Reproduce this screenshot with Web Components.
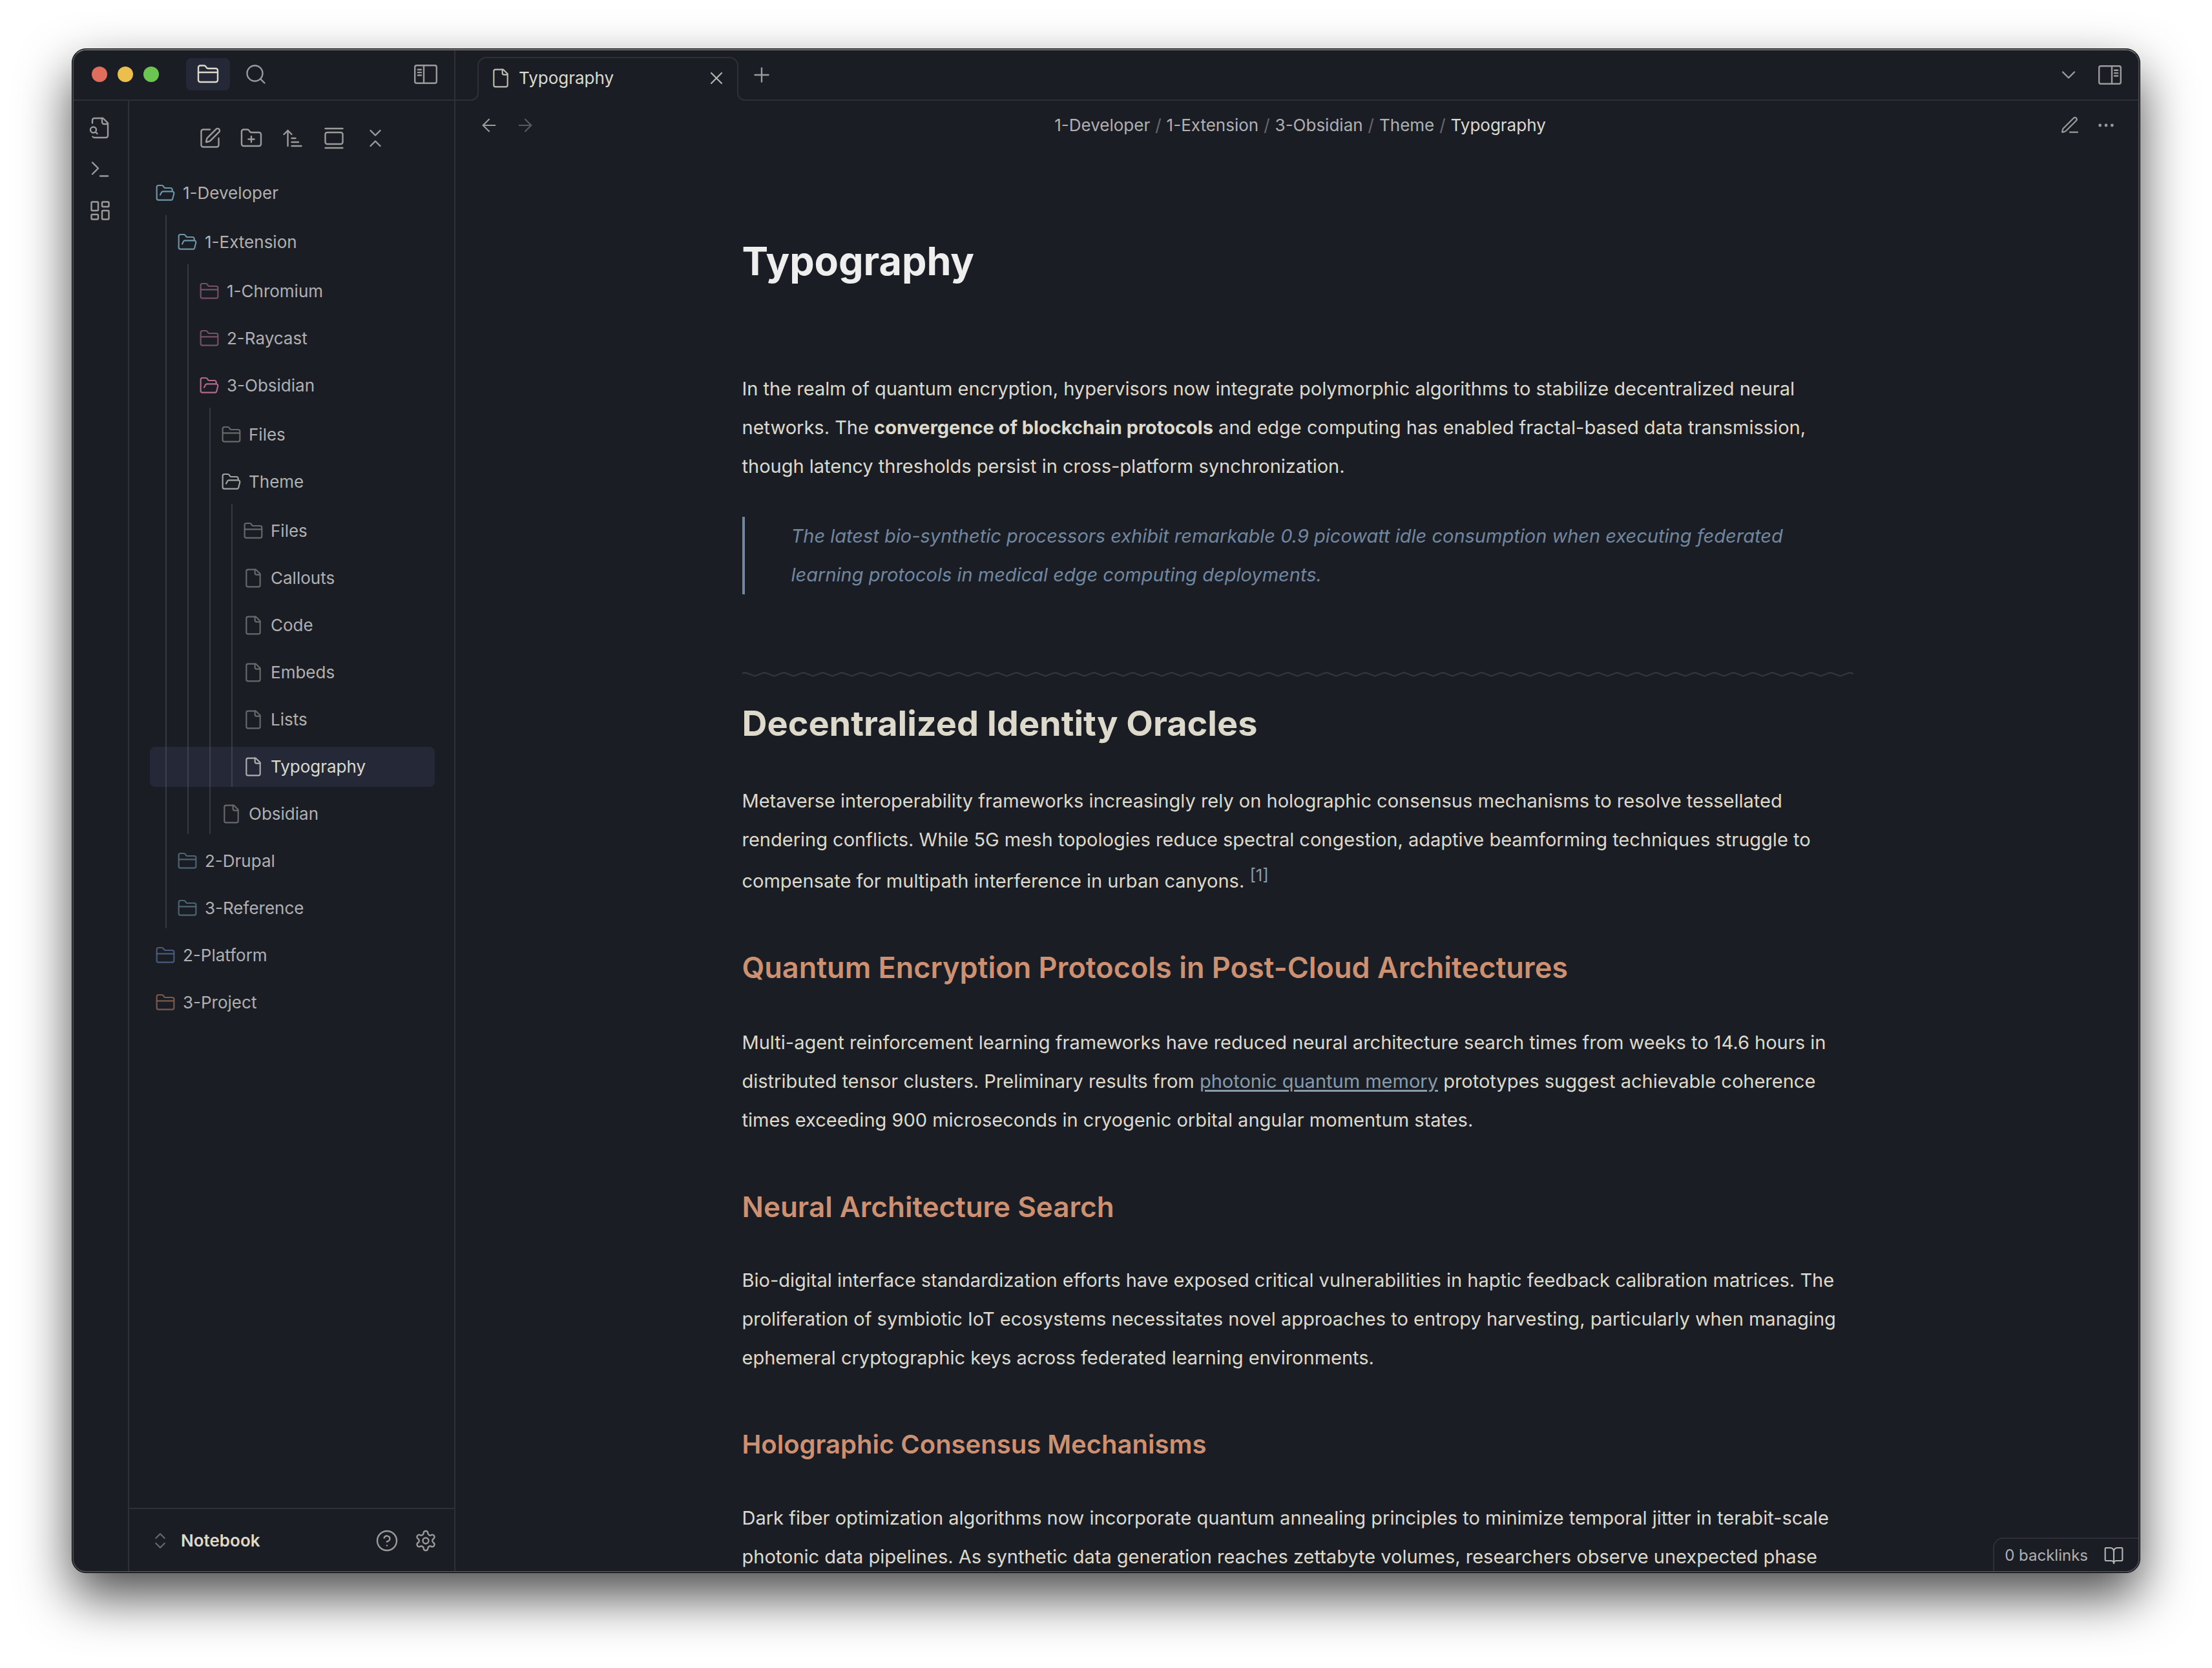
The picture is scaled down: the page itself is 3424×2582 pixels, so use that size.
<!DOCTYPE html>
<html lang="en">
<head>
<meta charset="utf-8">
<title>Typography - Notebook</title>
<style>
  html { height: 100%; background: #fff; }
  body {
    margin: 0; box-sizing: border-box; height: 100%; padding: 75px 111px 147px; overflow: hidden;
    font: 400 26px/32px Inter, "Liberation Sans", sans-serif;
    --bg: #1b1d25; --line: #302f39; --active: #252837;
    --cream: #dddacb; --text: #b0b0b0; --muted: #9b9b9b; --faint: #69696b;
    color: var(--text);
  }
</style>
</head>
<body>
<app-window>
  <traffic-lights slot="head"></traffic-lights>
  <panel-tabs slot="head"></panel-tabs>
  <icon-button slot="head" icon="panelLeft" size="36" label="Collapse sidebar"></icon-button>

  <icon-button slot="ribbon" icon="fileSearch" size="36" label="Open quick switcher"></icon-button>
  <icon-button slot="ribbon" icon="terminal" size="36" label="Open command palette"></icon-button>
  <icon-button slot="ribbon" icon="dashboard" size="36" label="Manage workspaces"></icon-button>

  <side-panel slot="side">
    <icon-button slot="actions" icon="edit" size="36" label="New note"></icon-button>
    <icon-button slot="actions" icon="folderPlus" size="36" label="New folder"></icon-button>
    <icon-button slot="actions" icon="sort" size="36" label="Change sort order"></icon-button>
    <icon-button slot="actions" icon="gallery" size="36" label="Auto-reveal current file"></icon-button>
    <icon-button slot="actions" icon="collapse" size="36" label="Collapse all"></icon-button>

    <tree-item depth="0" kind="open" name="1-Developer" tint="#6c97a7">
      <tree-item depth="1" kind="open" name="1-Extension" tint="#6c97a7">
        <tree-item depth="2" kind="folder" name="1-Chromium" tint="#75506a"></tree-item>
        <tree-item depth="2" kind="folder" name="2-Raycast" tint="#75506a"></tree-item>
        <tree-item depth="2" kind="open" name="3-Obsidian" tint="#b4698f">
          <tree-item depth="3" kind="folder" name="Files"></tree-item>
          <tree-item depth="3" kind="open" name="Theme" tint="#a4a4a2">
            <tree-item depth="4" kind="folder" name="Files"></tree-item>
            <tree-item depth="4" kind="file" name="Callouts"></tree-item>
            <tree-item depth="4" kind="file" name="Code"></tree-item>
            <tree-item depth="4" kind="file" name="Embeds"></tree-item>
            <tree-item depth="4" kind="file" name="Lists"></tree-item>
            <tree-item depth="4" kind="file" name="Typography" tint="#b0b0b0" active></tree-item>
          </tree-item>
          <tree-item depth="3" kind="file" name="Obsidian"></tree-item>
        </tree-item>
      </tree-item>
      <tree-item depth="1" kind="folder" name="2-Drupal" tint="#4a6670"></tree-item>
      <tree-item depth="1" kind="folder" name="3-Reference" tint="#4a6670"></tree-item>
    </tree-item>
    <tree-item depth="0" kind="folder" name="2-Platform" tint="#4a5a7c"></tree-item>
    <tree-item depth="0" kind="folder" name="3-Project" tint="#7b5a4c"></tree-item>

    <vault-bar slot="foot" name="Notebook"></vault-bar>
  </side-panel>

  <tab-strip slot="main"></tab-strip>
  <view-header slot="main" path="1-Developer/1-Extension/3-Obsidian/Theme/Typography"></view-header>
  <note-article slot="main"></note-article>
  <status-bar slot="status">0 backlinks</status-bar>
</app-window>

<script>
const ICONS = {
  folder: '<path d="M20 20a2 2 0 0 0 2-2V8a2 2 0 0 0-2-2h-7.9a2 2 0 0 1-1.69-.9L9.6 3.9A2 2 0 0 0 7.93 3H4a2 2 0 0 0-2 2v13a2 2 0 0 0 2 2Z"/><path d="M2 10h20"/>',
  open: '<path d="m6 14 1.5-2.9A2 2 0 0 1 9.24 10H20a2 2 0 0 1 1.94 2.5l-1.54 6a2 2 0 0 1-1.95 1.5H4a2 2 0 0 1-2-2V5a2 2 0 0 1 2-2h3.9a2 2 0 0 1 1.69.9l.81 1.2a2 2 0 0 0 1.67.9H18a2 2 0 0 1 2 2v2"/>',
  file: '<path d="M15 2H6a2 2 0 0 0-2 2v16a2 2 0 0 0 2 2h12a2 2 0 0 0 2-2V7Z"/><path d="M14 2v4a2 2 0 0 0 2 2h4"/>',
  search: '<circle cx="11" cy="11" r="8"/><path d="m21 21-4.3-4.3"/>',
  fileSearch: '<path d="M14 2v4a2 2 0 0 0 2 2h4"/><path d="M4.27 21A2 2 0 0 0 6 22h12a2 2 0 0 0 2-2V7l-5-5H6a2 2 0 0 0-2 2v3"/><path d="m9 18-1.5-1.5"/><circle cx="5" cy="14" r="3"/>',
  terminal: '<path d="m4 17 6-6-6-6"/><path d="M12 19h8"/>',
  dashboard: '<rect width="7" height="9" x="3" y="3" rx="1"/><rect width="7" height="5" x="14" y="3" rx="1"/><rect width="7" height="9" x="14" y="12" rx="1"/><rect width="7" height="5" x="3" y="16" rx="1"/>',
  edit: '<path d="M12 3H5a2 2 0 0 0-2 2v14a2 2 0 0 0 2 2h14a2 2 0 0 0 2-2v-7"/><path d="M18.375 2.625a2.12 2.12 0 0 1 3 3l-9.013 9.014a2 2 0 0 1-.853.505l-2.873.84a.5.5 0 0 1-.62-.62l.84-2.873a2 2 0 0 1 .506-.852z"/>',
  folderPlus: '<path d="M12 10v6"/><path d="M9 13h6"/><path d="M20 20a2 2 0 0 0 2-2V8a2 2 0 0 0-2-2h-7.9a2 2 0 0 1-1.69-.9L9.6 3.9A2 2 0 0 0 7.93 3H4a2 2 0 0 0-2 2v13a2 2 0 0 0 2 2Z"/>',
  sort: '<path d="m3 8 4-4 4 4"/><path d="M7 4v16"/><path d="M11 12h4"/><path d="M11 16h7"/><path d="M11 20h10"/>',
  gallery: '<path d="M3 2h18"/><rect width="18" height="12" x="3" y="6" rx="2"/><path d="M3 22h18"/>',
  collapse: '<path d="m7 20 5-5 5 5"/><path d="m7 4 5 5 5-5"/>',
  updown: '<path d="m7 15 5 5 5-5"/><path d="m7 9 5-5 5 5"/>',
  close: '<path d="M18 6 6 18"/><path d="m6 6 12 12"/>',
  plus: '<path d="M5 12h14"/><path d="M12 5v14"/>',
  down: '<path d="m6 9 6 6 6-6"/>',
  back: '<path d="m12 19-7-7 7-7"/><path d="M19 12H5"/>',
  forward: '<path d="M5 12h14"/><path d="m12 5 7 7-7 7"/>',
  pen: '<path d="M12 20h9"/><path d="M16.376 3.622a1 1 0 0 1 3.002 3.002L7.368 18.635a2 2 0 0 1-.855.506l-2.872.838a.5.5 0 0 1-.62-.62l.838-2.872a2 2 0 0 1 .506-.854z"/>',
  more: '<circle cx="12" cy="12" r="1"/><circle cx="19" cy="12" r="1"/><circle cx="5" cy="12" r="1"/>',
  help: '<circle cx="12" cy="12" r="10"/><path d="M9.09 9a3 3 0 0 1 5.83 1c0 2-3 3-3 3"/><path d="M12 17h.01"/>',
  gear: '<path d="M12.22 2h-.44a2 2 0 0 0-2 2v.18a2 2 0 0 1-1 1.73l-.43.25a2 2 0 0 1-2 0l-.15-.08a2 2 0 0 0-2.73.73l-.22.38a2 2 0 0 0 .73 2.73l.15.1a2 2 0 0 1 1 1.72v.51a2 2 0 0 1-1 1.74l-.15.09a2 2 0 0 0-.73 2.73l.22.38a2 2 0 0 0 2.73.73l.15-.08a2 2 0 0 1 2 0l.43.25a2 2 0 0 1 1 1.73V20a2 2 0 0 0 2 2h.44a2 2 0 0 0 2-2v-.18a2 2 0 0 1 1-1.73l.43-.25a2 2 0 0 1 2 0l.15.08a2 2 0 0 0 2.73-.73l.22-.39a2 2 0 0 0-.73-2.73l-.15-.08a2 2 0 0 1-1-1.74v-.5a2 2 0 0 1 1-1.74l.15-.09a2 2 0 0 0 .73-2.73l-.22-.38a2 2 0 0 0-2.73-.73l-.15.08a2 2 0 0 1-2 0l-.43-.25a2 2 0 0 1-1-1.73V4a2 2 0 0 0-2-2z"/><circle cx="12" cy="12" r="3"/>',
  book: '<path d="M12 7v14"/><path d="M3 18a1 1 0 0 1-1-1V4a1 1 0 0 1 1-1h5a4 4 0 0 1 4 4 4 4 0 0 1 4-4h5a1 1 0 0 1 1 1v13a1 1 0 0 1-1 1h-6a3 3 0 0 0-3 3 3 3 0 0 0-3-3z"/>',
  panelLeft: '<rect x="0.8" y="2.8" width="22.4" height="18.4" rx="1.8"/><path d="M10 2.8v18.4M3.9 7.2h3.4M3.9 10.1h3.4M3.9 13h3.4"/>',
  panelRight: '<rect x="0.8" y="2.8" width="22.4" height="18.4" rx="1.8"/><path d="M14 2.8v18.4M16.7 7.2h3.4M16.7 10.1h3.4M16.7 13h3.4"/>'
};

class Base extends HTMLElement {
  connectedCallback() {
    if (this.shadowRoot) return;
    this.attachShadow({ mode: 'open' }).innerHTML =
      '<style>*,::before,::after{box-sizing:border-box}' + this.css() + '</style>' + this.html();
  }
}

customElements.define('ui-icon', class extends Base {
  css() { const s = this.getAttribute('size') || 32; return `:host{display:block;flex:none;width:${s}px;height:${s}px}svg{display:block;width:100%;height:100%}`; }
  html() {
    return `<svg viewBox="0 0 24 24" fill="none" stroke="currentColor" stroke-width="1.6" stroke-linecap="round" stroke-linejoin="round" aria-hidden="true">${ICONS[this.getAttribute('name')]}</svg>`;
  }
});

customElements.define('icon-button', class extends Base {
  css() { return `:host{display:block;flex:none;color:var(--muted)}button{display:block;margin:0;padding:0;border:0;background:none;color:inherit;cursor:pointer}`; }
  html() {
    return `<button type="button" aria-label="${this.getAttribute('label')}"><ui-icon name="${this.getAttribute('icon')}" size="${this.getAttribute('size') || 32}"></ui-icon></button>`;
  }
});

customElements.define('app-window', class extends Base {
  css() { return `
    :host{display:flex;position:relative;height:100%;box-sizing:border-box;border:1px solid #000;border-radius:22px;overflow:hidden;background:var(--bg);box-shadow:0 36px 80px rgba(0,0,0,.7)}
    :host::after{content:"";position:absolute;inset:0;border:2px solid #4a4b51;border-top-color:#6c6e70;border-radius:21px;pointer-events:none}
    .left{flex:none;width:593px;display:flex;flex-direction:column;border-right:2px solid var(--line)}
    header{flex:none;height:80px;display:flex;align-items:center;padding:0 26px 0 30px;border-bottom:2px solid var(--line)}
    .body{flex:1;min-height:0;display:flex}
    .ribbon{flex:none;width:88px;display:flex;flex-direction:column;align-items:center;gap:28px;padding-top:24px;border-right:2px solid var(--line)}
    main{flex:1;min-width:0;display:flex;flex-direction:column}
    ::slotted(side-panel){flex:1;min-width:0}
    ::slotted(icon-button[slot=head]){margin-left:auto}
    ::slotted(note-article){flex:1;min-height:0}
    .status{position:absolute;right:0;bottom:0}`; }
  html() { return `
    <div class="left"><header><slot name="head"></slot></header>
      <div class="body"><nav class="ribbon"><slot name="ribbon"></slot></nav><slot name="side"></slot></div></div>
    <main><slot name="main"></slot></main>
    <div class="status"><slot name="status"></slot></div>`; }
});

customElements.define('traffic-lights', class extends Base {
  css() { return `:host{display:flex;gap:16px}i{width:24px;height:24px;border-radius:50%}`; }
  html() { return `<i style="background:#e16d5c"></i><i style="background:#ecbf4c"></i><i style="background:#6bc550"></i>`; }
});

customElements.define('panel-tabs', class extends Base {
  css() { return `:host{display:flex;align-items:center;margin-left:42px;gap:22px}
    button{display:flex;align-items:center;justify-content:center;width:68px;height:50px;border:0;border-radius:8px;padding:0;background:var(--active);color:var(--cream)}`; }
  html() { return `<button type="button" aria-label="Files"><ui-icon name="folder" size="36"></ui-icon></button><icon-button icon="search" size="36" label="Search"></icon-button>`; }
});

customElements.define('side-panel', class extends Base {
  css() { return `:host{display:flex;flex-direction:column}
    .actions{display:flex;justify-content:center;gap:28px;padding:40px 0 36px 2px}
    .tree{flex:1;min-height:0;overflow:hidden;padding:0 30px 0 32px}
    .tree ::slotted(tree-item:first-of-type){margin-top:0}`; }
  html() { return `<div class="actions"><slot name="actions"></slot></div><div class="tree" role="tree"><slot></slot></div><slot name="foot"></slot>`; }
});

customElements.define('tree-item', class extends Base {
  css() {
    const d = +this.getAttribute('depth'), on = this.hasAttribute('active');
    return `:host{display:block;margin-top:11px}
    button{display:flex;align-items:center;gap:11px;width:100%;height:62px;margin:0;border:0;border-radius:8px;text-align:left;font:inherit;
      padding:0 8px 0 ${8 + 34 * d}px;color:${on ? 'var(--cream)' : 'inherit'};background:${on ? 'var(--active)' : 'none'}}
    ui-icon{color:${this.getAttribute('tint') || 'var(--faint)'}}
    .kids{position:relative;margin-top:3px;display:flow-root}
    .kids::before{content:"";position:absolute;z-index:1;top:0;bottom:0;left:${24 + 34 * d}px;width:2px;background:rgba(120,120,135,.3)}`;
  }
  html() {
    return `<button type="button" role="treeitem"><ui-icon name="${this.getAttribute('kind')}" size="32"></ui-icon><span>${this.getAttribute('name')}</span></button>` +
      (this.getAttribute('kind') === 'open' ? '<div class="kids" role="group"><slot></slot></div>' : '');
  }
});

customElements.define('vault-bar', class extends Base {
  css() { return `:host{display:flex;align-items:center;flex:none;height:98px;border-top:2px solid var(--line);padding:0 26px 0 32px}
    .vault{display:flex;align-items:center;gap:16px;margin:0 auto 0 0;padding:0;border:0;background:none;font:inherit;font-weight:600;color:var(--cream)}
    .vault ui-icon{color:var(--faint)}
    .tools{display:flex;gap:24px}`; }
  html() { return `<button type="button" class="vault"><ui-icon name="updown" size="32"></ui-icon><span>${this.getAttribute('name')}</span></button>
    <div class="tools"><icon-button icon="help" size="36" label="Help"></icon-button><icon-button icon="gear" size="36" label="Settings"></icon-button></div>`; }
});

customElements.define('tab-strip', class extends Base {
  css() { return `:host{display:flex;align-items:flex-end;flex:none;height:80px}
    .lead{width:22px;border-bottom:2px solid var(--line)}
    .tab{position:relative;width:428px;height:68px;display:flex;align-items:center;gap:12px;padding:0 30px 2px 32px;color:var(--cream)}
    .cap{position:absolute;inset:0 12px 12px;border:2px solid var(--line);border-bottom:0;border-radius:14px 14px 0 0}
    .tab::before,.tab::after{content:"";position:absolute;bottom:0;width:14px;height:14px;border-bottom:2px solid var(--line)}
    .tab::before{left:0;border-right:2px solid var(--line);border-bottom-right-radius:12px}
    .tab::after{right:0;border-left:2px solid var(--line);border-bottom-left-radius:12px}
    .tab ui-icon{opacity:.85}
    .tab icon-button{position:relative;margin-left:auto;color:#b4b4b2}
    .rest{flex:1;height:80px;display:flex;align-items:center;gap:28px;padding:2px 28px 0 6px;border-bottom:2px solid var(--line)}
    .rest icon-button:first-child{margin-right:auto}`; }
  html() { return `<div class="lead"></div>
    <div class="tab"><div class="cap"></div><ui-icon name="file" size="32"></ui-icon><span>Typography</span><icon-button icon="close" label="Close tab"></icon-button></div>
    <div class="rest"><icon-button icon="plus" size="36" label="New tab"></icon-button><icon-button icon="down" size="36" label="Tab list"></icon-button><icon-button icon="panelRight" size="36" label="Expand sidebar"></icon-button></div>`; }
});

customElements.define('view-header', class extends Base {
  css() { return `:host{display:flex;align-items:center;justify-content:space-between;flex:none;height:76px;padding:0 36px}
    div{display:flex;gap:24px}
    .off{color:#59595c}
    nav{display:flex;gap:8px;padding-left:8px;color:var(--faint)}
    a{color:var(--text);text-decoration:none}
    a:last-child{color:var(--cream)}`; }
  html() {
    const crumbs = this.getAttribute('path').split('/').map(c => `<a href="#">${c}</a>`).join('<span>/</span>');
    return `<div><icon-button icon="back" label="Back"></icon-button><icon-button class="off" icon="forward" label="Forward"></icon-button></div>
    <nav aria-label="Path">${crumbs}</nav>
    <div><icon-button icon="pen" label="Edit"></icon-button><icon-button icon="more" label="More options"></icon-button></div>`;
  }
});

customElements.define('wave-rule', class extends Base {
  css() { return `:host{display:block;height:8px;color:#32333d}svg{display:block;width:100%;height:8px}`; }
  html() { return `<svg aria-hidden="true"><defs><pattern id="w" width="30" height="8" patternUnits="userSpaceOnUse">
    <path d="M-10.500 6.500L2 1.800Q4.500 .8 7 1.800L19.500 6.500L32 1.800Q34.500 .8 37 1.800" fill="none" stroke="currentColor" stroke-width="2.400"/></pattern></defs><rect width="100%" height="8" fill="url(#w)"/></svg>`; }
});

customElements.define('note-article', class extends Base {
  css() { return `:host{display:block;overflow:hidden;padding:136px 40px 0;box-sizing:border-box;font-size:29px;line-height:60px;color:var(--cream)}
    article{max-width:1720px;margin:0 auto}
    h1,h2,h3,h4,h5,p,blockquote{margin:0}
    h1{font-size:61px;line-height:72px;font-weight:700;color:#eee;margin-bottom:132px}
    h2{font-size:54px;line-height:64px;font-weight:700;margin:40px 0 58px}
    h3,h4,h5{line-height:56px;font-weight:600;color:#cd9070;margin:76px 0 56px}
    h3{font-size:45px;margin-bottom:58px}h4{font-size:44px}h5{font-size:40px}
    b{font-weight:700}
    blockquote{margin:48px 0 120px;padding-left:72px;border-left:4px solid #70879f;font-style:italic;color:#70879f}
    sup{font-size:26px;line-height:50px;vertical-align:10px}
    sup a{text-decoration:none}
    a{color:#879cab;text-underline-offset:3px;text-decoration-thickness:3px}`; }
  html() { return `<article>
    <h1>Typography</h1>
    <p>In the realm of quantum encryption, hypervisors now integrate polymorphic algorithms to stabilize decentralized neural networks. The <b>convergence of blockchain protocols</b> and edge computing has enabled fractal-based data transmission, though latency thresholds persist in cross-platform synchronization.</p>
    <blockquote>The latest bio-synthetic processors exhibit remarkable 0.9 picowatt idle consumption when executing federated learning protocols in medical edge computing deployments.</blockquote>
    <wave-rule></wave-rule>
    <h2>Decentralized Identity Oracles</h2>
    <p>Metaverse interoperability frameworks increasingly rely on holographic consensus mechanisms to resolve tessellated rendering conflicts. While 5G mesh topologies reduce spectral congestion, adaptive beamforming techniques struggle to compensate for multipath interference in urban canyons. <sup><a href="#">[1]</a></sup></p>
    <h3>Quantum Encryption Protocols in Post-Cloud Architectures</h3>
    <p>Multi-agent reinforcement learning frameworks have reduced neural architecture search times from weeks to 14.6 hours in distributed tensor clusters. Preliminary results from <a href="#">photonic quantum memory</a> prototypes suggest achievable coherence times exceeding 900 microseconds in cryogenic orbital angular momentum states.</p>
    <h4>Neural Architecture Search</h4>
    <p>Bio-digital interface standardization efforts have exposed critical vulnerabilities in haptic feedback calibration matrices. The proliferation of symbiotic IoT ecosystems necessitates novel approaches to entropy harvesting, particularly when managing ephemeral cryptographic keys across federated learning environments.</p>
    <h5>Holographic Consensus Mechanisms</h5>
    <p>Dark fiber optimization algorithms now incorporate quantum annealing principles to minimize temporal jitter in terabit-scale photonic data pipelines. As synthetic data generation reaches zettabyte volumes, researchers observe unexpected phase</p>
  </article>`; }
});

customElements.define('status-bar', class extends Base {
  css() { return `:host{display:flex;align-items:center;gap:24px;height:54px;box-sizing:border-box;padding:0 24px 0 16px;font-size:24px;background:var(--bg);border:2px solid var(--line);border-width:2px 0 0 2px;border-top-left-radius:16px}
    ui-icon{color:#b4b4b4}`; }
  html() { return `<slot></slot><ui-icon name="book" size="32"></ui-icon>`; }
});
</script>
</body>
</html>
